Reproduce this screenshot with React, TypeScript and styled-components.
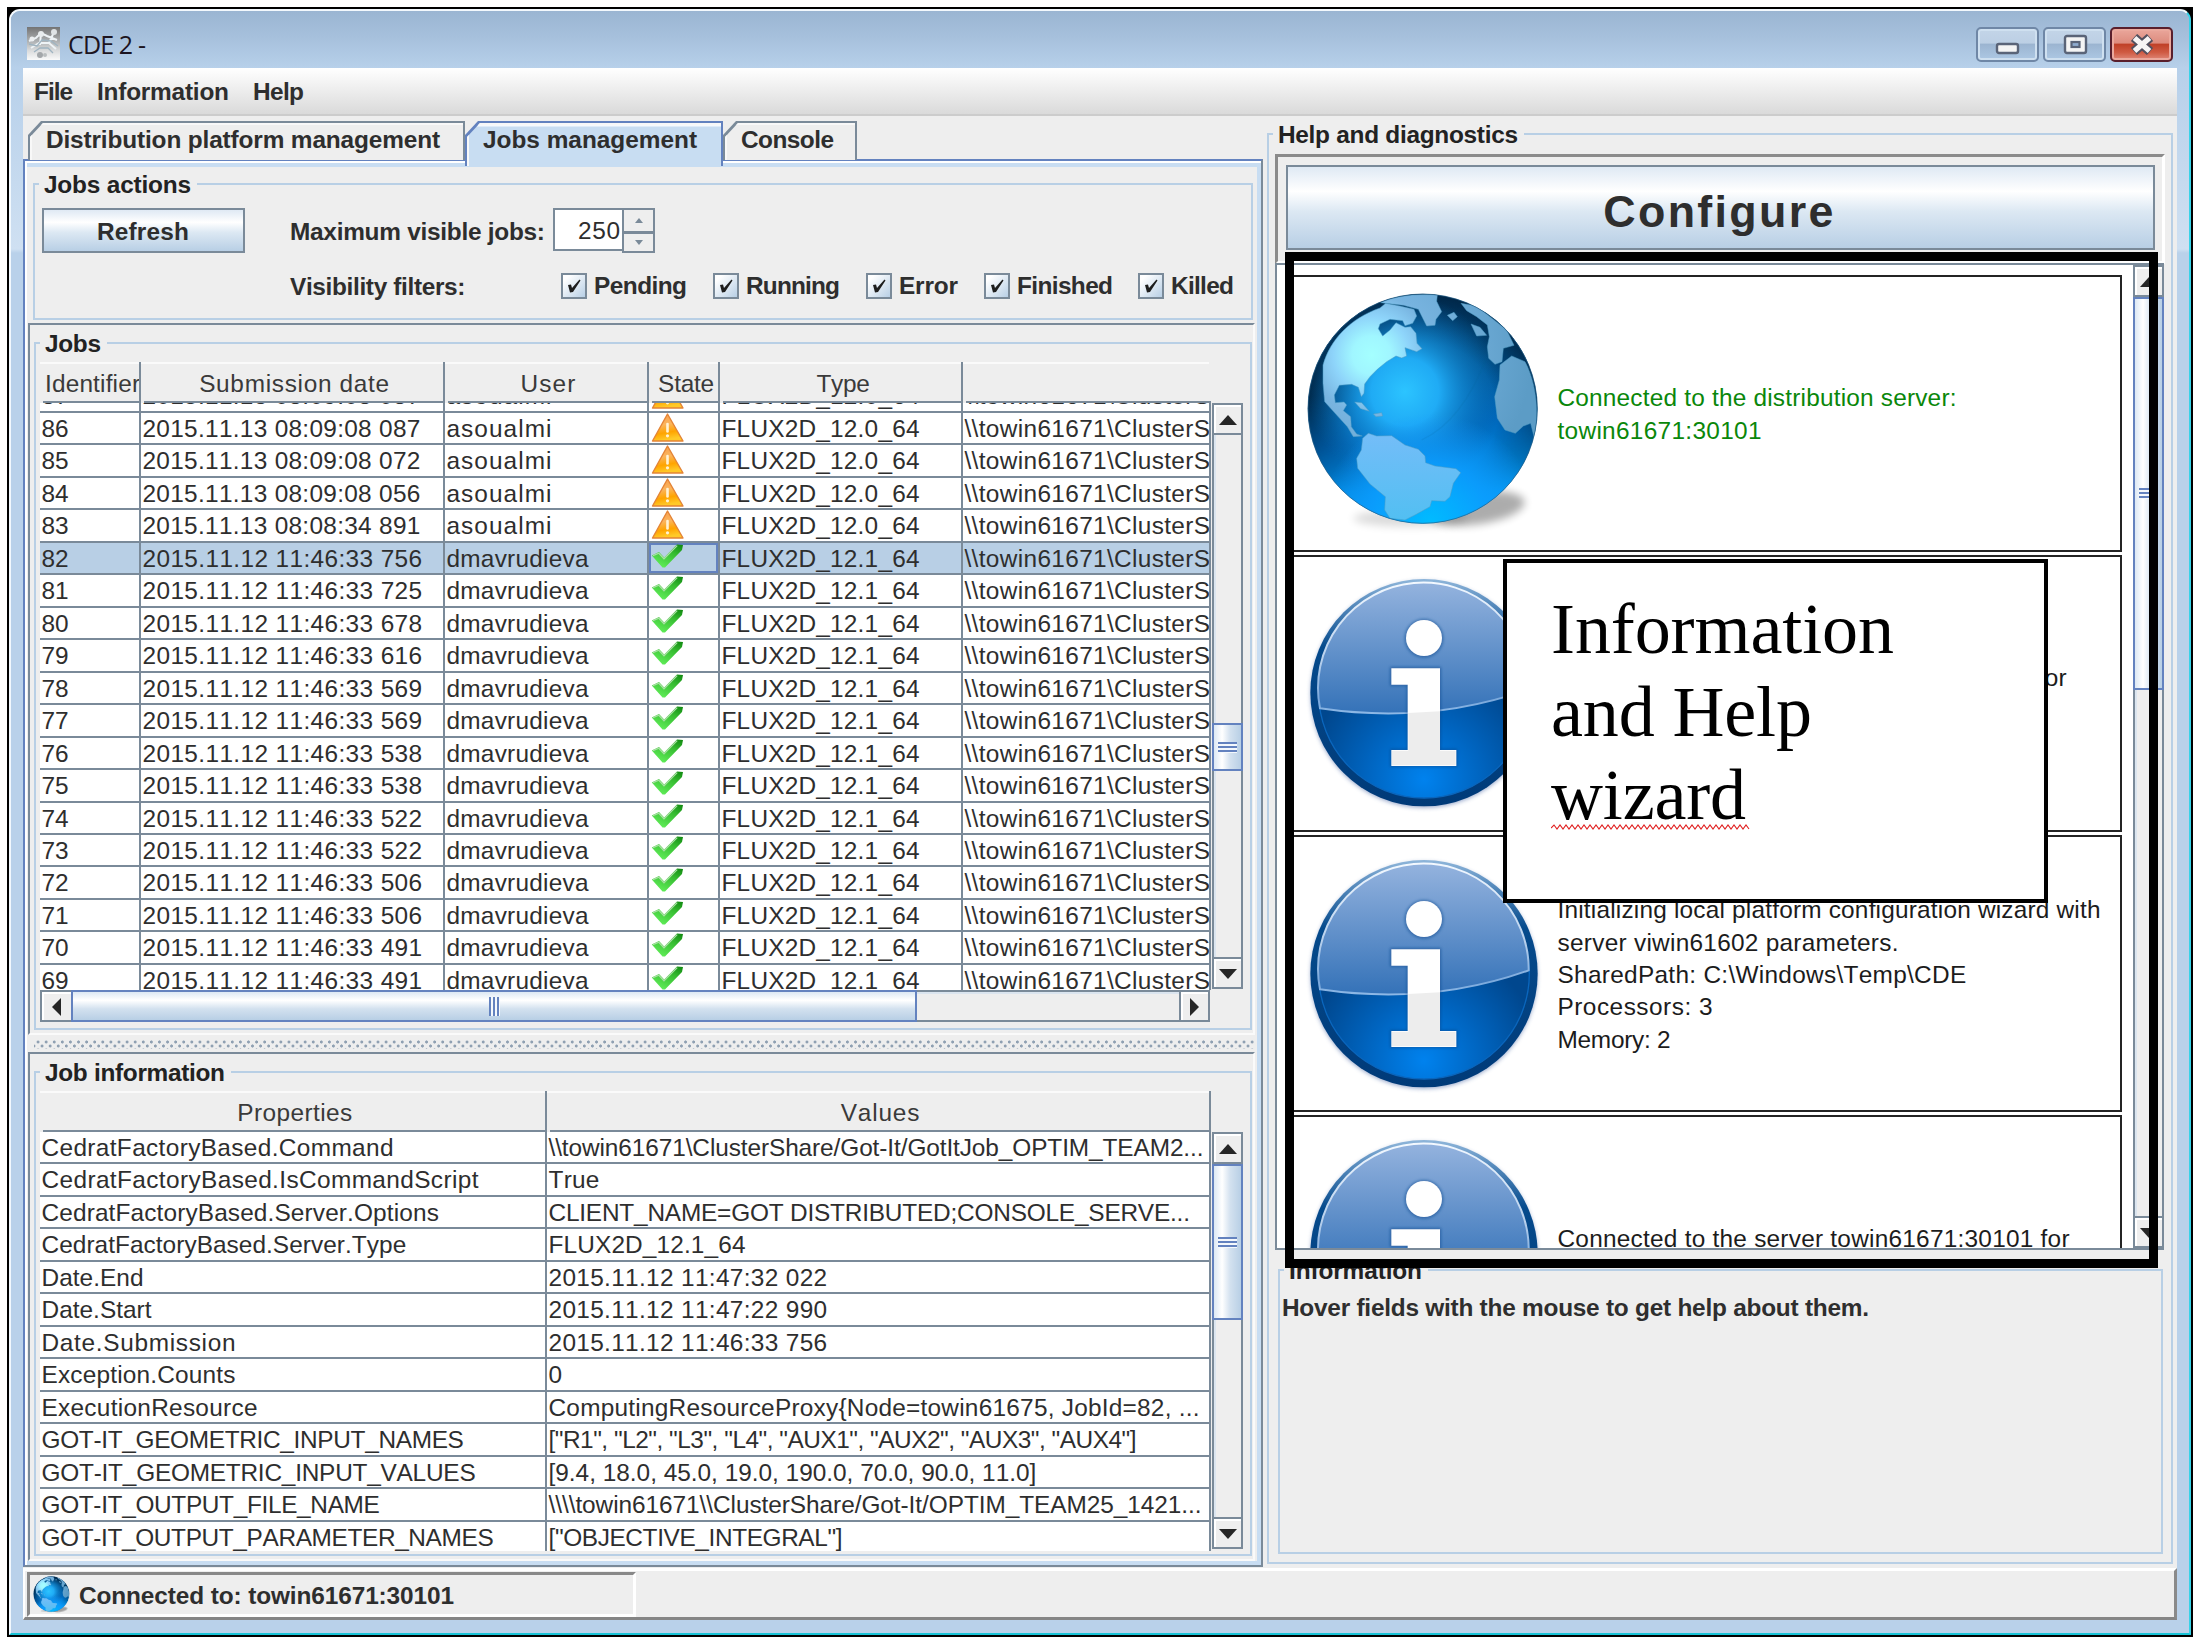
import React from 'react';
import styled, { createGlobalStyle, css } from 'styled-components';

const SANS = '"Liberation Sans", Arial, sans-serif';
const SERIF = '"Liberation Serif", "Times New Roman", serif';
const LINE = '#7a8a99';
const BLUE = '#6382bf';
const SOFT = '#b8cfe5';
const BG = '#eeeeee';

const Global = createGlobalStyle`
  * { box-sizing: border-box; }
  body { margin: 0; background: #fff; font-family: ${SANS}; font-size: 24.4px; color: #2e2e2e; }
`;

/* ---------- text fitted to a known advance width ---------- */

let ctx: CanvasRenderingContext2D | null = null;
function spacingFor(text: string, font: string, width: number) {
  if (!ctx) ctx = document.createElement('canvas').getContext('2d');
  if (!ctx) return 0;
  ctx.font = font;
  return (width - ctx.measureText(text).width) / Math.max(1, text.length - 1);
}

const Span = styled.span<{ $size: number; $bold: boolean; $family: string }>`
  white-space: pre;
  font-family: ${p => p.$family};
  font-size: ${p => p.$size}px;
  font-weight: ${p => (p.$bold ? 700 : 400)};
  font-kerning: none;
`;

type FitProps = { w: number; children: string; size?: number; bold?: boolean; family?: string };
function Fit({ w, children, size = 24.4, bold = false, family = SANS }: FitProps) {
  const s = spacingFor(children, `${bold ? 700 : 400} ${size}px ${family}`, w);
  return (
    <Span $size={size} $bold={bold} $family={family} style={{ letterSpacing: `${s.toFixed(3)}px` }}>
      {children}
    </Span>
  );
}

/* ---------- window ---------- */

const Page = styled.div`
  width: 2202px;
  height: 1644px;
  padding: 7px 9px 7px 7px;
  background: #fff;
  position: relative;
  overflow: hidden;
`;

const Window = styled.div`
  height: 1630px;
  background: #000;
  padding: 2px;
`;

const Frame = styled.div`
  height: 1626px;
  border: 2px solid #f2f8fd;
  border-right-color: #37d3e8;
  border-bottom-color: #17c3d6;
  border-radius: 11px 11px 0 0;
  background: linear-gradient(#9ab5d2 0, #b7d0ea 57px, #c3d8ee 150px, #cfe0f2 238px, #b9d1ea 242px);
  overflow: hidden;
  display: flex;
  flex-direction: column;
`;

const TitleBar = styled.div`
  flex: none;
  height: 57px;
  padding: 0 14px 0 16px;
  background: linear-gradient(#9ab5d2, #a6c0dc 45%, #b7d0ea);
  display: flex;
  align-items: flex-start;
`;

const TitleIcon = styled.div`
  margin-top: 16px;
  width: 33px;
  height: 33px;
`;

const TitleText = styled.div`
  margin: 15.5px 0 0 8px;
  line-height: 34px;
  color: #1c1420;
  flex: 1;
`;

const WinButtons = styled.div`
  display: flex;
  gap: 4px;
  margin: 16px 2px 0 0;
`;

const WinButton = styled.div<{ $close?: boolean }>`
  width: 63px;
  height: 35px;
  border-radius: 5px;
  border: 2px solid ${p => (p.$close ? '#5a1f2c' : '#6f87a6')};
  box-shadow: inset 0 0 0 2px ${p => (p.$close ? '#eba99d' : '#cfe0f0')};
  background: ${p =>
    p.$close
      ? 'linear-gradient(#eaa79c 0, #dd8b7d 46%, #bf3f26 48%, #cf5a42 75%, #e0897a 100%)'
      : 'linear-gradient(#c3d5e8 0, #bccfe4 46%, #9bb4d0 48%, #adc8e4 100%)'};
  display: flex;
  align-items: center;
  justify-content: center;
`;

const Body = styled.div`
  margin: 0 12px;
  height: 1552px;
  background: ${BG};
  display: flex;
  flex-direction: column;
`;

const MenuBar = styled.div`
  flex: none;
  height: 48px;
  border-bottom: 2px solid #cccccc;
  background: linear-gradient(#fff, #dadada);
  display: flex;
  align-items: center;
  padding: 2px 0 0 11px;
`;

const MenuItem = styled.div<{ $w: number }>`
  width: ${p => p.$w}px;
  line-height: 28px;
`;

const Main = styled.div`
  height: 1451px;
  display: flex;
`;

/* ---------- left side ---------- */

const LeftColumn = styled.div`
  width: 1240px;
  padding-top: 5px;
`;

const TabRow = styled.div`
  height: 40px;
  padding-left: 5px;
  display: flex;
  align-items: flex-start;
`;

const cut = css`
  clip-path: polygon(13px 0, 100% 0, 100% 100%, 0 100%, 0 14px);
`;

const Tab = styled.div<{ $w: number; $active?: boolean }>`
  ${cut}
  position: relative;
  z-index: ${p => (p.$active ? 1 : 0)};
  width: ${p => p.$w}px;
  height: ${p => (p.$active ? 45 : 39)}px;
  padding: 2px 2px 0;
  background: ${p => (p.$active ? BLUE : LINE)};
`;

const TabFace = styled.div<{ $active?: boolean; $pad: number }>`
  ${cut}
  height: 100%;
  line-height: 34px;
  padding-left: ${p => p.$pad}px;
  background: ${p => (p.$active ? 'linear-gradient(#f6fafe 0, #f6fafe 3px, #c8ddf2 4px)' : BG)};
  box-shadow: inset 2px 2px 0 #f8f8f8;
`;

const Pane = styled.div`
  height: 1408px;
  margin-top: -2px;
  border: 2px solid ${LINE};
  border-top-color: ${BLUE};
  border-left-color: ${BLUE};
  box-shadow: inset 2px 2px 0 #fff, inset 0 6px 0 #c8ddf2, inset 0 -4px 0 #c8ddf2, inset -4px 0 0 #c8ddf2;
  padding: 22px 0 0 3px;
`;

const Group = styled.section<{ $w: number; $h: number; $m: string }>`
  width: ${p => p.$w}px;
  height: ${p => p.$h}px;
  margin: ${p => p.$m};
  border: 2px solid ${SOFT};
`;

const Legend = styled.div`
  width: fit-content;
  height: 28px;
  line-height: 28px;
  margin: -14.5px 0 0 4px;
  padding: 0 6px 0 5px;
  background: ${BG};
  color: #222;
`;

const ActionRow = styled.div<{ $h: number; $m: string }>`
  display: flex;
  height: ${p => p.$h}px;
  margin: ${p => p.$m};
  line-height: ${p => p.$h}px;
`;

const Button = styled.div`
  width: 203px;
  height: 45px;
  border: 2px solid ${LINE};
  background: linear-gradient(#dfe9f4 0, #ffffff 30%, #dce8f3 55%, ${SOFT} 100%);
  text-align: center;
  line-height: 43px;
  padding-right: 1px;
`;

const BigButton = styled(Button)`
  width: 869px;
  height: 85px;
  line-height: 89px;
  margin: 8px 0 0 8px;
`;

const FieldLabel = styled.div<{ $w: number; $ml: number }>`
  width: ${p => p.$w}px;
  margin-left: ${p => p.$ml}px;
  line-height: inherit;
  padding-top: 1px;
`;

const Spinner = styled.div`
  display: flex;
  width: 102px;
  height: 45px;
`;

const SpinnerField = styled.div`
  width: 69px;
  height: 43px;
  background: #fff;
  border: 2px solid ${LINE};
  border-right: 0;
  padding-left: 23px;
  line-height: 42px;
`;

const SpinnerButtons = styled.div`
  width: 33px;
  display: grid;
  grid-template-rows: 1fr 1fr;
  border: 2px solid ${LINE};
`;

const SpinnerButton = styled.div`
  display: flex;
  align-items: center;
  justify-content: center;
  & + & { border-top: 3px solid ${LINE}; }
`;

const Check = styled.div<{ $w: number }>`
  width: ${p => p.$w}px;
  display: flex;
  gap: 7px;
`;

const Box = styled.div`
  width: 26px;
  height: 26px;
  border: 2px solid ${LINE};
  background: linear-gradient(135deg, #fff 15%, ${SOFT});
  display: flex;
`;

const SplitPane = styled.div<{ $h: number; $mt: number }>`
  width: 1227px;
  height: ${p => p.$h}px;
  margin-top: ${p => p.$mt}px;
  border-top: 2px solid ${LINE};
  border-left: 2px solid ${LINE};
  border-bottom: 2px solid #fafafa;
  border-right: 2px solid #fafafa;
  padding: 17px 0 0 4px;
`;

const Divider = styled.div`
  height: 17px;
  width: 1227px;
  padding: 5px 1px 0 6px;
`;

const Dots = styled.div`
  height: 9px;
  background-image: radial-gradient(circle, #8fa0b2 1.3px, transparent 1.8px),
    radial-gradient(circle, #8fa0b2 1.3px, transparent 1.8px);
  background-size: 8.1px 8px;
  background-position: 0 -2px, 4px 2px;
`;

/* ---------- tables ---------- */

const TableGrid = styled.div<{ $body: number }>`
  display: grid;
  grid-template-columns: 1172px 32px;
  grid-template-rows: 41px ${p => p.$body}px;
  margin: 4.5px 0 0 4px;
  width: 1204px;
`;

const HeaderRow = styled.div<{ $cols: string }>`
  display: grid;
  grid-template-columns: ${p => p.$cols};
`;

const HeaderCell = styled.div<{ $last?: boolean }>`
  border-right: 2px solid ${p => (p.$last ? 'transparent' : LINE)};
  overflow: hidden;
  text-align: center;
  line-height: 43px;
  padding-left: 5px;
  white-space: nowrap;
  color: #3a3a3a;
  background: linear-gradient(#fafafa 2px, transparent 2px) 0 0 / 100% 2px no-repeat,
    linear-gradient(${LINE}, ${LINE}) 3px 100% / 100% 2px no-repeat;
`;

const HeaderLeft = styled(HeaderCell)`
  text-align: left;
`;

const Viewport = styled.div<{ $offset?: number }>`
  overflow: hidden;
  background: #fff;
  width: 1171px;
  & > :first-child { margin-top: ${p => p.$offset ?? 0}px; }
`;

const Row = styled.div<{ $cols: string; $selected?: boolean }>`
  display: grid;
  grid-template-columns: ${p => p.$cols};
  height: 32.49px;
  background: ${p => (p.$selected ? SOFT : '#fff')};
`;

const Cell = styled.div<{ $focus?: boolean; $icon?: boolean }>`
  border-right: 2px solid ${LINE};
  border-bottom: 2px solid ${LINE};
  padding-left: 1.5px;
  line-height: 31px;
  overflow: hidden;
  white-space: nowrap;
  display: ${p => (p.$icon ? 'flex' : 'block')};
  align-items: flex-start;
  box-shadow: ${p => (p.$focus ? `inset 0 0 0 2px ${BLUE}` : 'none')};
`;

const Spacer = styled.div``;

/* ---------- scroll bars ---------- */

const Bar = styled.div<{ $dir: 'v' | 'h'; $len: number; $thick: number }>`
  display: flex;
  flex-direction: ${p => (p.$dir === 'v' ? 'column' : 'row')};
  width: ${p => (p.$dir === 'v' ? p.$thick : p.$len)}px;
  height: ${p => (p.$dir === 'v' ? p.$len : p.$thick)}px;
  background: ${BG};
  border: 2px solid ${LINE};
  box-shadow: inset 2px 2px 0 #dbe5ef;
`;

const ArrowButton = styled.div<{ $dir: 'v' | 'h'; $end?: boolean }>`
  flex: none;
  width: ${p => (p.$dir === 'v' ? 'auto' : '29px')};
  height: ${p => (p.$dir === 'v' ? '30px' : 'auto')};
  background: ${BG};
  box-shadow: inset 2px 2px 0 #fff;
  display: flex;
  align-items: center;
  justify-content: center;
  padding-top: 2px;
  padding-left: ${p => (p.$dir === 'v' ? 1 : 0)}px;
  ${p => p.$dir === 'v' && !p.$end && css`border-bottom: 2px solid ${LINE};`}
  ${p => p.$dir === 'v' && p.$end && css`border-top: 2px solid ${LINE};`}
  ${p => p.$dir === 'h' && p.$end && css`border-left: 2px solid ${LINE};`}
`;

const Track = styled.div<{ $dir: 'v' | 'h' }>`
  flex: 1;
  min-height: 0;
  display: flex;
  flex-direction: ${p => (p.$dir === 'v' ? 'column' : 'row')};
`;

const Thumb = styled.div<{ $dir: 'v' | 'h'; $at: number; $len: number }>`
  flex: none;
  border: 2px solid ${BLUE};
  display: flex;
  align-items: center;
  justify-content: center;
  ${p =>
    p.$dir === 'v'
      ? css`
          height: ${p.$len}px;
          margin: ${p.$at}px -2px 0;
          background: linear-gradient(90deg, #dce8f4, #fff 30%, #d3e1ef 60%, ${SOFT});
        `
      : css`
          width: ${p.$len}px;
          margin: -2px 0 -2px ${p.$at}px;
          background: linear-gradient(#dce8f4, #fff 30%, #d3e1ef 60%, ${SOFT});
        `}
`;

const Grip = styled.div<{ $dir: 'v' | 'h' }>`
  ${p =>
    p.$dir === 'v'
      ? css`
          width: 19px;
          height: 11px;
          background: repeating-linear-gradient(${BLUE} 0 2px, #f4f8fc 2px 4px);
        `
      : css`
          width: 11px;
          height: 19px;
          background: repeating-linear-gradient(90deg, ${BLUE} 0 2px, #f4f8fc 2px 4px);
        `}
`;

const arrows = {
  up: 'M0 10 L9 0 L18 10Z',
  down: 'M0 0 L18 0 L9 10Z',
  left: 'M9 0 L9 18 L0 9Z',
  right: 'M0 0 L9 9 L0 18Z',
};

function Arrow({ to }: { to: keyof typeof arrows }) {
  const vertical = to === 'up' || to === 'down';
  return (
    <svg width={vertical ? 18 : 10} height={vertical ? 10 : 18}>
      <path d={arrows[to]} fill="#262626" />
    </svg>
  );
}

function ScrollBar({ dir, len, thick = 31, at, thumb }: { dir: 'v' | 'h'; len: number; thick?: number; at: number; thumb: number }) {
  return (
    <Bar $dir={dir} $len={len} $thick={thick}>
      <ArrowButton $dir={dir}><Arrow to={dir === 'v' ? 'up' : 'left'} /></ArrowButton>
      <Track $dir={dir}>
        <Thumb $dir={dir} $at={at} $len={thumb}><Grip $dir={dir} /></Thumb>
      </Track>
      <ArrowButton $dir={dir} $end><Arrow to={dir === 'v' ? 'down' : 'right'} /></ArrowButton>
    </Bar>
  );
}

/* ---------- right side ---------- */

const RightColumn = styled.div`
  flex: 1;
  padding: 17px 0 0 4px;
`;

const Bevel = styled.div`
  width: 890px;
  height: 110px;
  margin: 5.5px 0 0 5.5px;
  border: 3px solid #8b8b8b;
  border-right-color: #fff;
  border-bottom-color: #fff;
`;

const ListPane = styled.div`
  width: 889px;
  height: 987px;
  margin: -1px 0 0 5.5px;
  border: 2px solid ${LINE};
  border-right: 0;
  background: #fff;
  display: flex;
  justify-content: space-between;
`;

const Cards = styled.div`
  height: 983px;
  overflow: hidden;
  padding: 9.5px 0 0 10px;
`;

const Card = styled.div`
  width: 835px;
  height: 277px;
  margin-bottom: 3.3px;
  border: 2px solid #242424;
  display: grid;
  grid-template-columns: 269px 1fr;
  align-items: center;
`;

const CardIcon = styled.div`
  width: 260px;
  height: 260px;
  margin-left: 1px;
`;

const Message = styled.div<{ $color: string }>`
  padding-top: 3px;
  color: ${p => p.$color};
`;

const MessageLine = styled.div`
  height: 32.4px;
  line-height: 32.4px;
`;

const Hint = styled.div`
  margin: 7px 0 0 2px;
  line-height: 32px;
`;

/* ---------- status ---------- */

const StatusBar = styled.div`
  height: 52px;
  margin-top: 1px;
  border-top: 3px solid #fff;
  border-left: 2px solid #fff;
  border-right: 3px solid #8a8a8a;
  border-bottom: 3px solid #858585;
  padding: 1px 0 0 2px;
`;

const StatusCell = styled.div`
  width: 609px;
  height: 45px;
  border: 3px solid #888;
  border-right-color: #fff;
  border-bottom-color: #fff;
  display: flex;
  align-items: center;
  gap: 9px;
  padding-left: 3px;
`;

const StatusText = styled.div`
  padding-top: 2px;
`;

/* ---------- annotation layer ---------- */

const Highlight = styled.div`
  position: absolute;
  left: 1285px;
  top: 252px;
  width: 873px;
  height: 1016px;
  border: 9px solid #000;
`;

const Callout = styled.div`
  position: absolute;
  left: 1503px;
  top: 559px;
  width: 545px;
  height: 344px;
  background: #fff;
  border: 4px solid #000;
  padding: 25px 0 0 44px;
  color: #000;
`;

const CalloutLine = styled.div`
  height: 83.2px;
  line-height: 83.2px;
`;

const Squiggle = styled.svg`
  display: block;
  margin-top: -14px;
`;

/* ---------- drawings ---------- */

function AppIcon() {
  return (
    <svg width="33" height="33" viewBox="0 0 33 33">
      <defs>
        <linearGradient id="appBg" x1="0" y1="0" x2="0" y2="1">
          <stop offset="0" stopColor="#747474" />
          <stop offset="0.4" stopColor="#a9acae" />
          <stop offset="0.7" stopColor="#d8dadb" />
          <stop offset="1" stopColor="#fafafa" />
        </linearGradient>
      </defs>
      <rect width="33" height="33" fill="url(#appBg)" />
      <path d="M2 14 L9 11 L14 6 L20 9 L30 13 M4 21 L12 16 L22 16 L29 22 M14 6 L13 18 M22 16 L27 5" stroke="#eef3f6" strokeWidth="2" fill="none" />
      <path d="M2 17 L10 19 L15 13 L24 14 L31 19 M7 25 L13 21 L21 21 L26 26" stroke="#9fb4c1" strokeWidth="1.3" fill="none" />
      <circle cx="14" cy="7" r="3" fill="#e8ecee" />
      <circle cx="27" cy="5" r="3" fill="#dfe3e5" />
      <circle cx="13" cy="28" r="3" fill="#a3a7aa" />
      <circle cx="18" cy="28" r="2" fill="#b9bdbf" />
      <circle cx="5" cy="12" r="2.5" fill="#eceff1" />
    </svg>
  );
}

function WarningIcon() {
  return (
    <svg width="33" height="30" viewBox="0 0 33 30">
      <defs>
        <linearGradient id="warn" x1="0" y1="0" x2="0.2" y2="1">
          <stop offset="0" stopColor="#f79a4a" />
          <stop offset="0.45" stopColor="#fbb45c" />
          <stop offset="0.75" stopColor="#ffa400" />
          <stop offset="1" stopColor="#ffc928" />
        </linearGradient>
      </defs>
      <path d="M16.5 1 L32 28 L1.5 28Z" fill="url(#warn)" stroke="#e48436" strokeWidth="1.4" strokeLinejoin="round" />
      <path d="M16.5 11 V18.5" stroke="#fff3d6" strokeWidth="2.6" strokeLinecap="round" />
      <circle cx="16.5" cy="22.8" r="1.6" fill="#fff3d6" />
    </svg>
  );
}

function OkIcon() {
  return (
    <svg width="32" height="27" viewBox="0 0 32 27">
      <defs>
        <linearGradient id="ok" x1="1" y1="0" x2="0.35" y2="1">
          <stop offset="0" stopColor="#0f860f" />
          <stop offset="0.4" stopColor="#35bb30" />
          <stop offset="1" stopColor="#5fec57" />
        </linearGradient>
      </defs>
      <path d="M0.8 12.5 L8 9 L13.2 14.5 L26 1.5 L32 2 L31 7 L14 24.5 L11.5 24.5Z" fill="url(#ok)" />
      <path d="M2 12.6 L7.8 10.2 L13 15.8 L26.2 2.6" stroke="#a9dfa4" strokeWidth="1.3" fill="none" />
    </svg>
  );
}

function Globe({ size, box, id }: { size: [number, number]; box: string; id: string }) {
  const land = `url(#${id}land)`;
  return (
    <svg width={size[0]} height={size[1]} viewBox={box} preserveAspectRatio="none" display="block">
      <defs>
        <linearGradient id={`${id}base`} x1="0.4" y1="0" x2="0.55" y2="1">
          <stop offset="0" stopColor="#02447a" />
          <stop offset="0.3" stopColor="#035590" />
          <stop offset="0.6" stopColor="#0068bc" />
          <stop offset="1" stopColor="#00a8ff" />
        </linearGradient>
        <radialGradient id={`${id}glow`} cx="345" cy="335" r="290" gradientUnits="userSpaceOnUse">
          <stop offset="0" stopColor="#2cc4ff" />
          <stop offset="0.35" stopColor="#22b2fc" stopOpacity="0.92" />
          <stop offset="0.7" stopColor="#1289d4" stopOpacity="0.45" />
          <stop offset="1" stopColor="#0a6bb0" stopOpacity="0" />
        </radialGradient>
        <radialGradient id={`${id}low`} cx="420" cy="730" r="330" gradientUnits="userSpaceOnUse">
          <stop offset="0" stopColor="#00bcff" />
          <stop offset="0.55" stopColor="#0c9dff" stopOpacity="0.85" />
          <stop offset="1" stopColor="#1497ff" stopOpacity="0" />
        </radialGradient>
        <radialGradient id={`${id}edge`} cx="410" cy="400" r="352" gradientUnits="userSpaceOnUse">
          <stop offset="0.6" stopColor="#00203c" stopOpacity="0" />
          <stop offset="1" stopColor="#00203c" stopOpacity="0.8" />
        </radialGradient>
        <linearGradient id={`${id}fade`} x1="0" y1="0" x2="0" y2="1">
          <stop offset="0.45" stopColor="#fff" />
          <stop offset="0.85" stopColor="#000" />
        </linearGradient>
        <mask id={`${id}mask`}><rect x="40" y="30" width="720" height="710" fill={`url(#${id}fade)`} /></mask>
        <radialGradient id={`${id}land`} cx="245" cy="225" r="480" gradientUnits="userSpaceOnUse">
          <stop offset="0" stopColor="#a4ffff" />
          <stop offset="0.12" stopColor="#a0f6ff" />
          <stop offset="0.24" stopColor="#8ed4fa" />
          <stop offset="0.38" stopColor="#78b4e0" />
          <stop offset="1" stopColor="#5c9cc6" />
        </radialGradient>
        <linearGradient id={`${id}south`} x1="0" y1="0" x2="0" y2="1">
          <stop offset="0" stopColor="#74bdf8" />
          <stop offset="1" stopColor="#52bff2" />
        </linearGradient>
        <filter id={`${id}blur`} x="-20%" y="-50%" width="140%" height="200%"><feGaussianBlur stdDeviation="13" /></filter>
        <clipPath id={`${id}clip`}><circle cx="398" cy="386" r="345" /></clipPath>
      </defs>
      <ellipse cx="560" cy="685" rx="145" ry="48" fill="#000" opacity="0.32" filter={`url(#${id}blur)`} transform="rotate(-8 560 685)" />
      <ellipse cx="360" cy="715" rx="170" ry="25" fill="#000" opacity="0.14" filter={`url(#${id}blur)`} />
      <g clipPath={`url(#${id}clip)`}>
        <circle cx="398" cy="386" r="345" fill={`url(#${id}base)`} />
        <circle cx="398" cy="386" r="345" fill={`url(#${id}edge)`} mask={`url(#${id}mask)`} />
        <circle cx="398" cy="386" r="345" fill={`url(#${id}glow)`} />
        <circle cx="398" cy="386" r="345" fill={`url(#${id}low)`} />
        <g stroke="#4f9cc4" strokeOpacity="0.6" strokeWidth="2.5" strokeLinejoin="round">
          <path fill={land} d="M99 255 C120 180 180 115 270 84 L287 70 L330 78 L372 88 L380 108 L368 130 L345 137 L338 122 L300 118 L270 132 L265 146 L278 168 L300 150 L318 128 L345 142 L362 140 L378 160 L381 190 L396 206 L380 215 L345 203 L350 228 L335 234 L318 228 L290 245 L262 268 L240 290 L224 312 L222 340 L214 350 L205 322 L185 313 L148 316 L133 345 L136 368 L162 366 L170 375 L160 392 L182 410 L184 440 L200 462 L217 468 L190 470 L172 440 L140 405 L104 365 L99 310Z" />
          <path fill={land} d="M272 68 C310 50 370 40 442 45 L440 64 L455 95 L438 118 L435 136 L410 138 L396 110 L385 88 L340 76Z" />
          <path fill={land} d="M472 106 L492 97 L502 110 L488 122Z" />
          <path fill={land} d="M513 70 L560 78 L600 110 L650 150 L672 196 L640 205 L636 245 L615 253 L596 235 L592 200 L598 170 L592 135 L560 110 L530 92Z" />
          <path fill={land} d="M543 132 L570 142 L590 166 L560 168Z" />
          <path fill={land} d="M630 255 L665 228 L705 245 C735 300 750 390 732 470 L722 430 L700 438 L676 460 L645 450 L622 415 L614 350 L628 300Z" />
          <path fill={land} d="M194 366 L215 368 L238 394 L212 386Z M250 402 L275 398 L278 408 L258 410Z" />
          <path fill={`url(#${id}south)`} d="M218 475 L235 460 L260 468 L305 467 L345 495 L385 508 L405 528 L407 548 L435 558 L498 566 L512 578 L490 610 L480 650 L465 664 L425 662 L420 680 L375 705 L345 720 L300 715 L284 690 L286 650 L240 612 L203 565 L200 535 L214 510Z" />
        </g>
        <path d="M395 480 Q520 420 590 230" stroke="#0a5f92" strokeOpacity="0.12" strokeWidth="4" fill="none" />
      </g>
      <circle cx="398" cy="386" r="344" fill="none" stroke="#2b6187" strokeOpacity="0.7" strokeWidth="3" />
    </svg>
  );
}

function InfoIcon({ id }: { id: string }) {
  return (
    <svg width="260" height="260" viewBox="0 10 780 780" display="block">
      <defs>
        <linearGradient id={`${id}rim`} x1="0" y1="0" x2="0" y2="1">
          <stop offset="0" stopColor="#8fb6da" />
          <stop offset="0.1" stopColor="#5c8fc0" />
          <stop offset="0.3" stopColor="#054a8c" />
          <stop offset="1" stopColor="#003a78" />
        </linearGradient>
        <radialGradient id={`${id}body`} cx="402" cy="660" r="350" gradientUnits="userSpaceOnUse">
          <stop offset="0" stopColor="#0082ee" />
          <stop offset="0.5" stopColor="#0064bf" />
          <stop offset="1" stopColor="#00478e" />
        </radialGradient>
        <linearGradient id={`${id}gloss`} x1="0" y1="0" x2="0" y2="1">
          <stop offset="0" stopColor="#94b3de" />
          <stop offset="1" stopColor="#3472b8" />
        </linearGradient>
        <linearGradient id={`${id}edge`} x1="0" y1="0" x2="0" y2="1">
          <stop offset="0" stopColor="#f2f8ff" />
          <stop offset="0.6" stopColor="#b6cfec" />
          <stop offset="0.9" stopColor="#7ba9dc" />
          <stop offset="1" stopColor="#8db8e6" />
        </linearGradient>
        <filter id={`${id}soft`}><feGaussianBlur stdDeviation="7" /></filter>
        <filter id={`${id}halo`}><feGaussianBlur stdDeviation="4" /></filter>
      </defs>
      <circle cx="402" cy="404" r="340" fill="#36559a" opacity="0.5" filter={`url(#${id}soft)`} />
      <circle cx="402" cy="399" r="341" fill={`url(#${id}rim)`} />
      <circle cx="402" cy="399" r="316" fill={`url(#${id}body)`} stroke="#0a66bd" strokeWidth="4" />
      <path d="M90 446 A316 316 0 1 1 716 389 Q 420 495 90 446Z" fill={`url(#${id}gloss)`} stroke={`url(#${id}edge)`} strokeWidth="6" />
      <g fill="#0b478c" opacity="0.55" filter={`url(#${id}halo)`}>
        <circle cx="402" cy="236" r="58" />
        <path d="M300 322 H453 V567 H502 V622 H300 V567 H350 V378 H300Z" />
      </g>
      <circle cx="402" cy="235" r="54" fill="#fff" />
      <path d="M304 326 H450 V571 H499 V619 H304 V571 H353 V375 H304Z" fill="#fff" />
      <path d="M355 460 L450 455 V573 H497 V617 H306 V573 H355Z" fill="#ededed" />
    </svg>
  );
}

/* ---------- data ---------- */

const jobCols = '101px 304px 204px 71px 243px 248px';
const jobs: [string, string, boolean][] = [
  ['87', '2015.11.13 08:09:08 087', false],
  ['86', '2015.11.13 08:09:08 087', false],
  ['85', '2015.11.13 08:09:08 072', false],
  ['84', '2015.11.13 08:09:08 056', false],
  ['83', '2015.11.13 08:08:34 891', false],
  ['82', '2015.11.12 11:46:33 756', true],
  ['81', '2015.11.12 11:46:33 725', true],
  ['80', '2015.11.12 11:46:33 678', true],
  ['79', '2015.11.12 11:46:33 616', true],
  ['78', '2015.11.12 11:46:33 569', true],
  ['77', '2015.11.12 11:46:33 569', true],
  ['76', '2015.11.12 11:46:33 538', true],
  ['75', '2015.11.12 11:46:33 538', true],
  ['74', '2015.11.12 11:46:33 522', true],
  ['73', '2015.11.12 11:46:33 522', true],
  ['72', '2015.11.12 11:46:33 506', true],
  ['71', '2015.11.12 11:46:33 506', true],
  ['70', '2015.11.12 11:46:33 491', true],
  ['69', '2015.11.12 11:46:33 491', true],
];

const propCols = '507px 664px';
const props: [string, number, string, number][] = [
  ['CedratFactoryBased.Command', 352, '\\\\towin61671\\ClusterShare/Got-It/GotItJob_OPTIM_TEAM2...', 655],
  ['CedratFactoryBased.IsCommandScript', 437, 'True', 50],
  ['CedratFactoryBased.Server.Options', 396, 'CLIENT_NAME=GOT DISTRIBUTED;CONSOLE_SERVE...', 641],
  ['CedratFactoryBased.Server.Type', 362, 'FLUX2D_12.1_64', 197],
  ['Date.End', 102, '2015.11.12 11:47:32 022', 275],
  ['Date.Start', 110, '2015.11.12 11:47:22 990', 275],
  ['Date.Submission', 194, '2015.11.12 11:46:33 756', 275],
  ['Exception.Counts', 194, '0', 13],
  ['ExecutionResource', 216, 'ComputingResourceProxy{Node=towin61675, JobId=82, ...', 651],
  ['GOT-IT_GEOMETRIC_INPUT_NAMES', 421, '["R1", "L2", "L3", "L4", "AUX1", "AUX2", "AUX3", "AUX4"]', 588],
  ['GOT-IT_GEOMETRIC_INPUT_VALUES', 431, '[9.4, 18.0, 45.0, 19.0, 190.0, 70.0, 90.0, 11.0]', 486],
  ['GOT-IT_OUTPUT_FILE_NAME', 337, '\\\\\\\\towin61671\\\\ClusterShare/Got-It/OPTIM_TEAM25_1421...', 653],
  ['GOT-IT_OUTPUT_PARAMETER_NAMES', 449, '["OBJECTIVE_INTEGRAL"]', 294],
];

const filters: [string, number, number][] = [
  ['Pending', 93, 152],
  ['Running', 94, 153],
  ['Error', 59, 118],
  ['Finished', 96, 154],
  ['Killed', 63, 100],
];

const menus: [string, number, number][] = [
  ['File', 39, 63],
  ['Information', 132, 156],
  ['Help', 51, 80],
];

function Tick() {
  return (
    <svg width="22" height="22" viewBox="0 0 22 22">
      <path d="M5 10 L8 9.5 L9 13 L16.5 4.5 L17.5 5.5 L10 17 L7 17.5Z" fill="#1e1e1e" />
    </svg>
  );
}

const HBar = styled.div`
  margin-left: 4px;
`;

function JobsTable() {
  return (
    <>
      <TableGrid $body={587}>
        <HeaderRow $cols={jobCols}>
          <HeaderLeft><Fit w={95}>Identifier</Fit></HeaderLeft>
          <HeaderCell><Fit w={190}>Submission date</Fit></HeaderCell>
          <HeaderCell><Fit w={55}>User</Fit></HeaderCell>
          <HeaderCell><Fit w={56}>State</Fit></HeaderCell>
          <HeaderCell><Fit w={52}>Type</Fit></HeaderCell>
          <HeaderCell $last />
        </HeaderRow>
        <Spacer />
        <Viewport $offset={-22.8}>
          {jobs.map(([id, date, ok]) => (
            <Row key={id} $cols={jobCols} $selected={id === '82'}>
              <Cell><Fit w={27}>{id}</Fit></Cell>
              <Cell><Fit w={276}>{date}</Fit></Cell>
              <Cell>{ok ? <Fit w={142}>dmavrudieva</Fit> : <Fit w={105}>asoualmi</Fit>}</Cell>
              <Cell $icon $focus={id === '82'}>{ok ? <OkIcon /> : <WarningIcon />}</Cell>
              <Cell><Fit w={198}>{ok ? 'FLUX2D_12.1_64' : 'FLUX2D_12.0_64'}</Fit></Cell>
              <Cell><Fit w={245.5}>{'\\\\towin61671\\ClusterS'}</Fit></Cell>
            </Row>
          ))}
        </Viewport>
        <ScrollBar dir="v" len={586} at={288} thumb={48} />
      </TableGrid>
      <HBar><ScrollBar dir="h" thick={32} len={1170} at={0} thumb={846} /></HBar>
    </>
  );
}

function PropsTable() {
  return (
    <TableGrid $body={419}>
      <HeaderRow $cols={propCols}>
        <HeaderCell><Fit w={115}>Properties</Fit></HeaderCell>
        <HeaderCell><Fit w={77}>Values</Fit></HeaderCell>
      </HeaderRow>
      <Spacer />
      <Viewport>
        {props.map(([name, nw, value, vw]) => (
          <Row key={name} $cols={propCols}>
            <Cell><Fit w={nw}>{name}</Fit></Cell>
            <Cell><Fit w={vw}>{value}</Fit></Cell>
          </Row>
        ))}
      </Viewport>
      <ScrollBar dir="v" len={417} at={0} thumb={156} />
    </TableGrid>
  );
}

function InfoCard({ id, lines }: { id: string; lines: [string, number][] }) {
  return (
    <Card>
      <CardIcon><InfoIcon id={id} /></CardIcon>
      <Message $color="#1c1c1c">
        {lines.map(([t, w], i) => (
          <MessageLine key={i}>{t && <Fit w={w}>{t}</Fit>}</MessageLine>
        ))}
      </Message>
    </Card>
  );
}

export default function App() {
  return (
    <Page>
      <Global />
      <Window>
        <Frame>
          <TitleBar>
            <TitleIcon><AppIcon /></TitleIcon>
            <TitleText><Fit w={78} size={25} family='"Open Sans", "Noto Sans", sans-serif'>CDE 2 -</Fit></TitleText>
            <WinButtons>
              <WinButton>
                <svg width="26" height="20"><rect x="2" y="9" width="21" height="9" rx="2" fill="#f4f4f4" stroke="#5a6478" strokeWidth="2.4" /></svg>
              </WinButton>
              <WinButton>
                <svg width="26" height="22">
                  <rect x="3" y="2" width="21" height="17" rx="2" fill="#f4f4f4" stroke="#5a6478" strokeWidth="2.4" />
                  <rect x="9.5" y="8" width="8" height="5" fill="#8fabce" stroke="#5a6478" strokeWidth="2.2" />
                </svg>
              </WinButton>
              <WinButton $close>
                <svg width="26" height="22">
                  <path d="M5 3.5 L21 17.5 M21 3.5 L5 17.5" stroke="#54505e" strokeWidth="9.5" />
                  <path d="M5.5 4 L20.5 17 M20.5 4 L5.5 17" stroke="#f7f4f4" strokeWidth="5.4" />
                </svg>
              </WinButton>
            </WinButtons>
          </TitleBar>
          <Body>
            <MenuBar>
              {menus.map(([t, w, slot]) => (
                <MenuItem key={t} $w={slot}><Fit bold w={w}>{t}</Fit></MenuItem>
              ))}
            </MenuBar>
            <Main>
              <LeftColumn>
                <TabRow>
                  <Tab $w={437}><TabFace $pad={16}><Fit bold w={394}>Distribution platform management</Fit></TabFace></Tab>
                  <Tab $w={258} $active><TabFace $active $pad={16}><Fit bold w={214}>Jobs management</Fit></TabFace></Tab>
                  <Tab $w={134}><TabFace $pad={16}><Fit bold w={93}>Console</Fit></TabFace></Tab>
                </TabRow>
                <Pane>
                  <Group $w={1220} $h={137} $m="0 0 0 5px">
                    <Legend><Fit bold w={147}>Jobs actions</Fit></Legend>
                    <ActionRow $h={45} $m="9.5px 0 0 7px">
                      <Button><Fit bold w={92}>Refresh</Fit></Button>
                      <FieldLabel $ml={45} $w={263}><Fit bold w={255}>Maximum visible jobs:</Fit></FieldLabel>
                      <Spinner>
                        <SpinnerField><Fit w={42}>250</Fit></SpinnerField>
                        <SpinnerButtons>
                          <SpinnerButton><svg width="8" height="5"><path d="M0 5 L4 0 L8 5Z" fill={LINE} /></svg></SpinnerButton>
                          <SpinnerButton><svg width="8" height="5"><path d="M0 0 L8 0 L4 5Z" fill={LINE} /></svg></SpinnerButton>
                        </SpinnerButtons>
                      </Spinner>
                    </ActionRow>
                    <ActionRow $h={26} $m="20px 0 0 0">
                      <FieldLabel $ml={255} $w={271}><Fit bold w={175}>Visibility filters:</Fit></FieldLabel>
                      {filters.map(([t, w, slot]) => (
                        <Check key={t} $w={slot}><Box><Tick /></Box><Fit bold w={w}>{t}</Fit></Check>
                      ))}
                    </ActionRow>
                  </Group>
                  <SplitPane $h={712} $mt={3}>
                    <Group $w={1218} $h={688} $m="0">
                      <Legend><Fit bold w={56}>Jobs</Fit></Legend>
                      <JobsTable />
                    </Group>
                  </SplitPane>
                  <Divider><Dots /></Divider>
                  <SplitPane $h={509} $mt={0}>
                    <Group $w={1218} $h={485} $m="0">
                      <Legend><Fit bold w={180}>Job information</Fit></Legend>
                      <PropsTable />
                    </Group>
                  </SplitPane>
                </Pane>
              </LeftColumn>
              <RightColumn>
                <Group $w={906} $h={1431} $m="0">
                  <Legend><Fit bold w={240}>Help and diagnostics</Fit></Legend>
                  <Bevel><BigButton><Fit bold size={44.8} w={230}>Configure</Fit></BigButton></Bevel>
                  <ListPane>
                    <Cards>
                      <Card>
                        <CardIcon><Globe id="g1" size={[260, 260]} box="0 9 780 780" /></CardIcon>
                        <Message $color="#0a870a">
                          <MessageLine><Fit w={399}>Connected to the distribution server:</Fit></MessageLine>
                          <MessageLine><Fit w={204}>towin61671:30101</Fit></MessageLine>
                        </Message>
                      </Card>
                      <InfoCard id="i1" lines={[['Connected to the server towin61671:30101 for', 509], ['', 0]]} />
                      <InfoCard
                        id="i2"
                        lines={[
                          ['Initializing local platform configuration wizard with', 543],
                          ['server viwin61602 parameters.', 341],
                          ['SharedPath: C:\\Windows\\Temp\\CDE', 406],
                          ['Processors: 3', 155],
                          ['Memory: 2', 113],
                        ]}
                      />
                      <InfoCard id="i3" lines={[['Connected to the server towin61671:30101 for', 512], ['', 0]]} />
                    </Cards>
                    <ScrollBar dir="v" len={983} at={0} thumb={393} />
                  </ListPane>
                  <Group $w={885} $h={285} $m="19px 0 0 9px">
                    <Legend><Fit bold w={133}>Information</Fit></Legend>
                    <Hint><Fit bold w={587}>Hover fields with the mouse to get help about them.</Fit></Hint>
                  </Group>
                </Group>
              </RightColumn>
            </Main>
            <StatusBar>
              <StatusCell>
                <Globe id="g2" size={[37, 37]} box="45 35 710 720" />
                <StatusText><Fit bold w={375}>Connected to: towin61671:30101</Fit></StatusText>
              </StatusCell>
            </StatusBar>
          </Body>
        </Frame>
      </Window>
      <Highlight />
      <Callout>
        <CalloutLine><Fit size={72} w={343} family={SERIF}>Information</Fit></CalloutLine>
        <CalloutLine><Fit size={72} w={261} family={SERIF}>and Help</Fit></CalloutLine>
        <CalloutLine><Fit size={72} w={195} family={SERIF}>wizard</Fit></CalloutLine>
        <Squiggle width="200" height="6">
          <path
            d={'M0 4 ' + Array.from({ length: 33 }, (_, i) => `L${i * 6 + 3} 1 L${i * 6 + 6} 5`).join(' ')}
            stroke="#e02020"
            strokeWidth="1.1"
            fill="none"
          />
        </Squiggle>
      </Callout>
    </Page>
  );
}
